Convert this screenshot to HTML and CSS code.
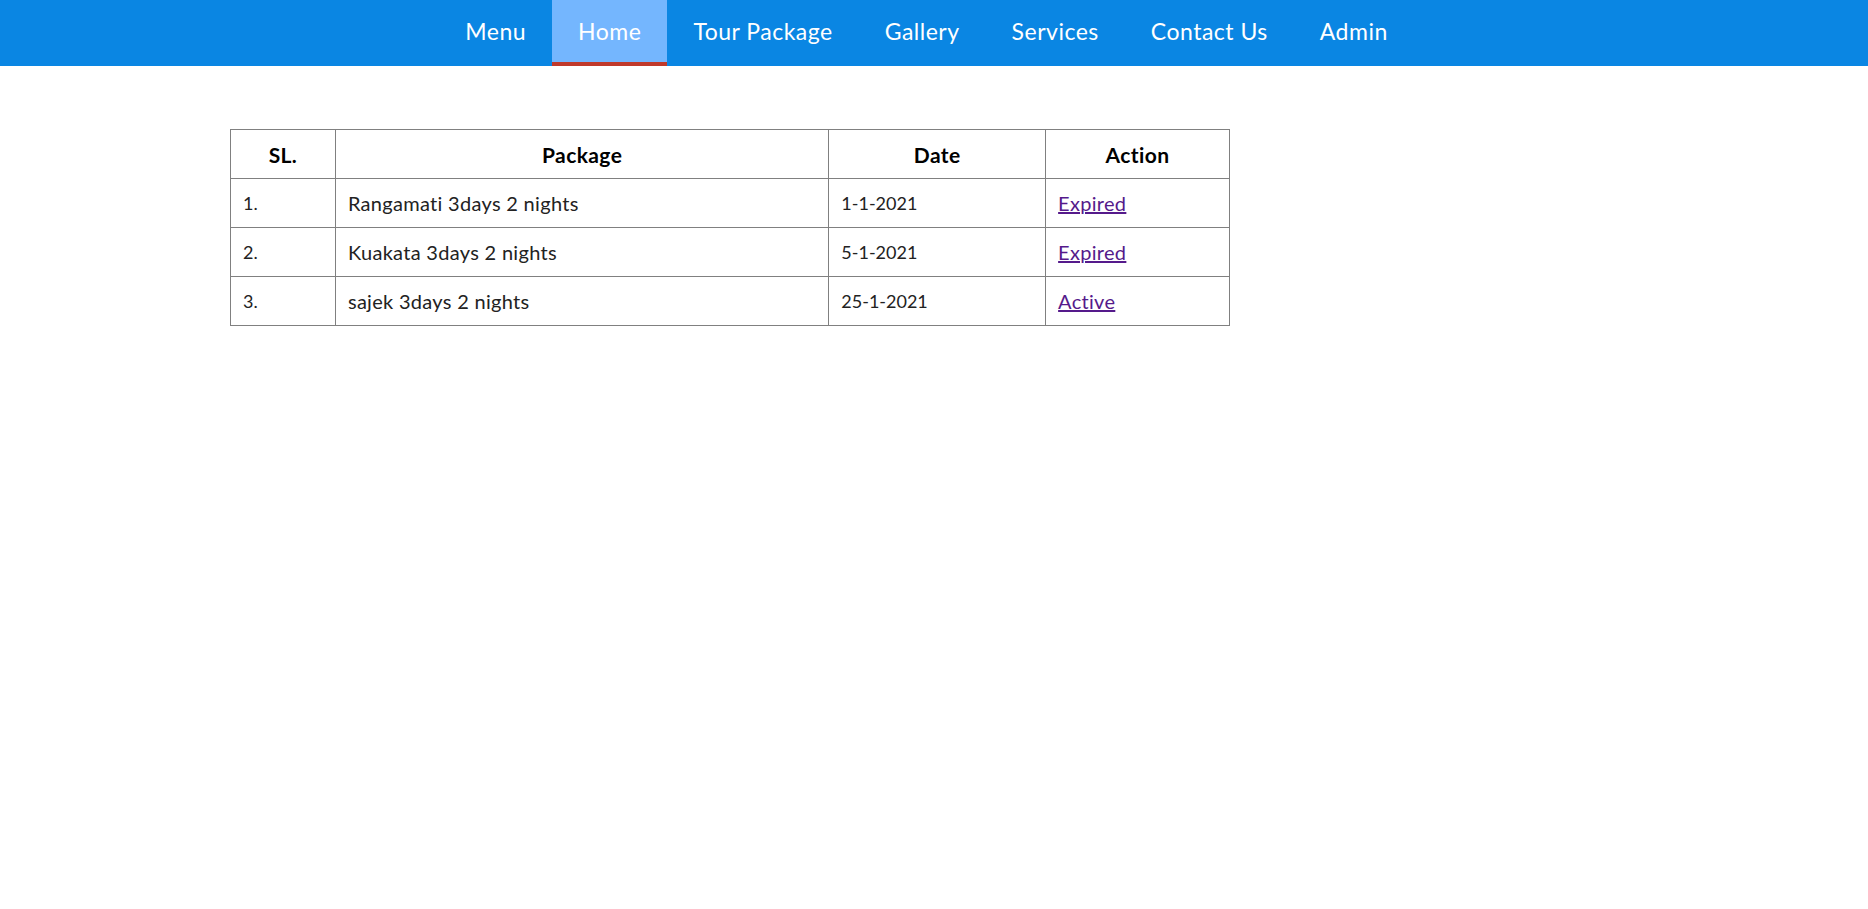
FILE: index.html
```html
<!DOCTYPE html>
<html lang="en">
<head>
<meta charset="utf-8">
<title>Tour Packages</title>
<link rel="stylesheet" href="styles.css">
</head>
<body>
<nav class="topnav">
  <ul class="menu">
    <li><a href="#">Menu</a></li>
    <li class="active"><a href="#">Home</a></li>
    <li><a href="#">Tour Package</a></li>
    <li><a href="#">Gallery</a></li>
    <li><a href="#">Services</a></li>
    <li><a href="#">Contact Us</a></li>
    <li><a href="#">Admin</a></li>
  </ul>
</nav>
<main class="content">
  <table class="packages">
    <thead>
      <tr>
        <th class="c-sl">SL.</th>
        <th class="c-pkg">Package</th>
        <th class="c-date">Date</th>
        <th class="c-act">Action</th>
      </tr>
    </thead>
    <tbody>
      <tr><td class="num">1.</td><td>Rangamati 3days 2 nights</td><td class="num">1-1-2021</td><td><a class="visited" href="#">Expired</a></td></tr>
      <tr><td class="num">2.</td><td>Kuakata 3days 2 nights</td><td class="num">5-1-2021</td><td><a class="visited" href="#">Expired</a></td></tr>
      <tr><td class="num">3.</td><td>sajek 3days 2 nights</td><td class="num">25-1-2021</td><td><a class="visited" href="#">Active</a></td></tr>
    </tbody>
  </table>
</main>
</body>
</html>
```
FILE: styles.css
```css
html, body {
  margin: 0;
  padding: 0;
  background: #ffffff;
  font-family: Lato, "Open Sans", "Liberation Sans", sans-serif;
}

.topnav {
  background: #0a86e3;
  height: 66px;
}

.menu {
  list-style: none;
  margin: 0;
  padding: 0 15px 0 0;
  display: flex;
  justify-content: center;
  height: 100%;
}

.menu li {
  display: flex;
}

.menu a {
  display: flex;
  align-items: center;
  padding: 0 26px 4px;
  color: #ffffff;
  text-decoration: none;
  font-size: 23px;
  letter-spacing: 0.5px;
  box-sizing: border-box;
  height: 100%;
}

.menu .active a {
  background: #74b6fe;
  border-bottom: 4px solid #c0392b;
  padding-bottom: 0;
}

.content {
  padding: 63px 0 0 230px;
}

.packages {
  border-collapse: collapse;
  width: 1000px;
  font-size: 20px;
  letter-spacing: 0.3px;
  color: #222222;
}

.packages th,
.packages td {
  border: 1px solid #808080;
  height: 49px;
  padding: 0 12px;
  box-sizing: border-box;
}

.packages th {
  font-weight: bold;
  font-size: 21px;
  letter-spacing: 0.4px;
  color: #000000;
  text-align: center;
}

.packages td {
  text-align: left;
}

.packages td.num {
  font-size: 18px;
  letter-spacing: 0;
}

.c-sl { width: 105px; }
.c-pkg { width: 494px; }
.c-date { width: 217px; }
.c-act { width: 184px; }

.packages a.visited {
  color: #551a8b;
  text-decoration: underline;
}
```
